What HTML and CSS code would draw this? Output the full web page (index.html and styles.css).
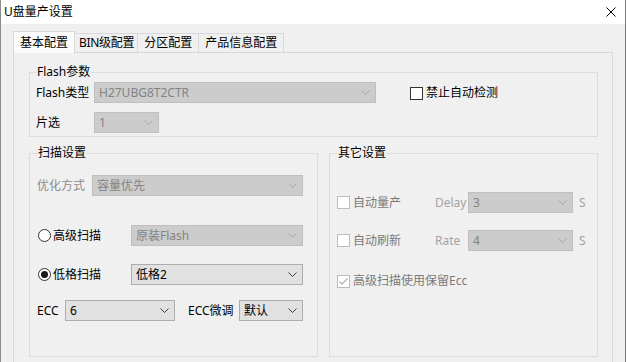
FILE: index.html
```html
<!DOCTYPE html>
<html lang="zh-CN">
  <head>
    <meta charset="utf-8" />
    <title>U盘量产设置</title>
    <link rel="stylesheet" href="styles.css">
  </head>

  <body>
    <div class="window">
      <div class="titlebar">
        <span class="title">U盘量产设置</span>
        <svg class="close" width="10" height="10" viewBox="0 0 10 10">
          <path d="M0.5 0.5 L9.5 9.5 M9.5 0.5 L0.5 9.5" stroke="#000" stroke-width="1" fill="none" />
        </svg>
      </div>

      <div class="dialog">
        <div class="tabs">
          <div class="tab active">基本配置</div>
          <div class="tab tab-bin">BIN级配置</div>
          <div class="tab">分区配置</div>
          <div class="tab">产品信息配置</div>
        </div>

        <div class="panel">
          <!-- Flash参数 -->
          <fieldset class="group flash">
            <legend>Flash参数</legend>
            <div class="flash-body">
              <div class="flash-fields">
                <div class="row">
                  <span class="label flash-label">Flash类型</span>
                  <div class="combo disabled flash-type">
                    <span>H27UBG8T2CTR</span>
                    <svg width="9" height="5" viewBox="0 0 9 5"><polyline points="0.5,0.5 4.5,4.5 8.5,0.5" /></svg>
                  </div>
                </div>
                <div class="row row-chip">
                  <span class="label flash-label">片选</span>
                  <div class="combo disabled chip">
                    <span>1</span>
                    <svg width="9" height="5" viewBox="0 0 9 5"><polyline points="0.5,0.5 4.5,4.5 8.5,0.5" /></svg>
                  </div>
                </div>
              </div>
              <div class="check no-detect">
                <span class="box"></span>
                <span>禁止自动检测</span>
              </div>
            </div>
          </fieldset>

          <div class="lower">
            <!-- 扫描设置 -->
            <fieldset class="group scan">
              <legend>扫描设置</legend>
              <div class="row scan-opt">
                <span class="label dim opt-label">优化方式</span>
                <div class="combo disabled opt-combo">
                  <span>容量优先</span>
                  <svg width="9" height="5" viewBox="0 0 9 5"><polyline points="0.5,0.5 4.5,4.5 8.5,0.5" /></svg>
                </div>
              </div>
              <div class="row scan-adv">
                <div class="radio-item">
                  <span class="radio"></span>
                  <span>高级扫描</span>
                </div>
                <div class="combo disabled scan-combo">
                  <span>原装Flash</span>
                  <svg width="9" height="5" viewBox="0 0 9 5"><polyline points="0.5,0.5 4.5,4.5 8.5,0.5" /></svg>
                </div>
              </div>
              <div class="row scan-low">
                <div class="radio-item">
                  <span class="radio checked"></span>
                  <span>低格扫描</span>
                </div>
                <div class="combo scan-combo">
                  <span>低格2</span>
                  <svg width="9" height="5" viewBox="0 0 9 5"><polyline points="0.5,0.5 4.5,4.5 8.5,0.5" /></svg>
                </div>
              </div>
              <div class="row scan-ecc">
                <span class="label ecc-label">ECC</span>
                <div class="combo ecc-combo">
                  <span>6</span>
                  <svg width="9" height="5" viewBox="0 0 9 5"><polyline points="0.5,0.5 4.5,4.5 8.5,0.5" /></svg>
                </div>
                <span class="label tune-label">ECC微调</span>
                <div class="combo tune-combo">
                  <span>默认</span>
                  <svg width="9" height="5" viewBox="0 0 9 5"><polyline points="0.5,0.5 4.5,4.5 8.5,0.5" /></svg>
                </div>
              </div>
            </fieldset>

            <!-- 其它设置 -->
            <fieldset class="group other">
              <legend>其它设置</legend>
              <div class="row other-auto">
                <div class="check disabled auto-check">
                  <span class="box"></span>
                  <span>自动量产</span>
                </div>
                <span class="label faint unit-label">Delay</span>
                <div class="combo disabled timer-combo">
                  <span>3</span>
                  <svg width="9" height="5" viewBox="0 0 9 5"><polyline points="0.5,0.5 4.5,4.5 8.5,0.5" /></svg>
                </div>
                <span class="label faint unit">S</span>
              </div>
              <div class="row other-refresh">
                <div class="check disabled auto-check">
                  <span class="box"></span>
                  <span>自动刷新</span>
                </div>
                <span class="label faint unit-label">Rate</span>
                <div class="combo disabled timer-combo">
                  <span>4</span>
                  <svg width="9" height="5" viewBox="0 0 9 5"><polyline points="0.5,0.5 4.5,4.5 8.5,0.5" /></svg>
                </div>
                <span class="label faint unit">S</span>
              </div>
              <div class="row other-ecc">
                <div class="check disabled">
                  <span class="box">
                    <svg width="11" height="11" viewBox="0 0 11 11"><polyline points="1.5,5.5 4,8 9.5,2.5" /></svg>
                  </span>
                  <span>高级扫描使用保留Ecc</span>
                </div>
              </div>
            </fieldset>
          </div>
        </div>
      </div>
    </div>
  </body>
</html>
```

FILE: styles.css
```css
html {
  font-family: "Noto Sans", "Noto Sans CJK SC", sans-serif;
  font-size: 12px;
  line-height: 16px;
}

body {
  margin: 0;
  width: 627px;
  height: 362px;
  overflow: hidden;
  background-color: #fff;
  color: #000;
}

.window {
  box-sizing: border-box;
  width: 626px;
  height: 362px;
  border-left: 1px solid #8c8c8c;
  border-right: 1px solid #7a7a7a;
  background-color: #f0f0f0;
}

.titlebar {
  height: 24px;
  background-color: #fff;
  display: flex;
  align-items: center;
  justify-content: space-between;
  padding: 0 9px 0 3px;
}

.close {
  margin-bottom: 1px;
}

.dialog {
  padding: 7px 12px 0 12px;
}

/* tabs */
.tabs {
  display: flex;
  align-items: flex-end;
  height: 21px;
}

.tab {
  box-sizing: border-box;
  height: 19px;
  padding: 0 6px;
  line-height: 18px;
  border: 1px solid #d9d9d9;
  border-bottom: none;
  margin-left: -1px;
  background-color: #f0f0f0;
}

.tab-bin {
  padding: 0 3px 0 4px;
  letter-spacing: -0.3px;
}

.tab.active {
  height: 22px;
  margin-left: 0;
  margin-bottom: -1px;
  line-height: 21px;
  background-color: #fbfbfb;
  position: relative;
  z-index: 1;
}

.panel {
  box-sizing: border-box;
  border: 1px solid #d9d9d9;
  border-bottom: none;
  height: 310px;
  padding: 11px 14px 0 15px;
}

/* group boxes */
.group {
  margin: 0;
  padding: 0;
  border: 1px solid #dcdcdc;
  min-width: 0;
}

.group legend {
  margin-left: 0;
  padding: 0 1px;
  line-height: 16px;
}

.row {
  display: flex;
  align-items: center;
}

.label {
  white-space: nowrap;
}

.dim {
  color: #8c8c8c;
}

.faint {
  color: #a3a3a3;
}

/* combo boxes */
.combo {
  box-sizing: border-box;
  height: 21px;
  display: flex;
  align-items: center;
  justify-content: space-between;
  padding: 0 5px 0 4px;
  border: 1px solid #adadad;
  background-color: #e1e1e1;
  color: #000;
}

.combo svg polyline {
  fill: none;
  stroke: #3c3c3c;
  stroke-width: 1;
}

.combo.disabled {
  border-color: #bfbfbf;
  background-color: #cccccc;
  color: #838383;
}

.combo.disabled svg polyline {
  stroke: #a6a6a6;
}

/* check boxes and radios */
.check,
.radio-item {
  display: flex;
  align-items: center;
  white-space: nowrap;
}

.box {
  box-sizing: border-box;
  width: 13px;
  height: 13px;
  border: 1px solid #333;
  background-color: #fff;
  margin-right: 3px;
  display: flex;
  align-items: center;
  justify-content: center;
}

.check.disabled {
  color: #7a7a7a;
}

.check.disabled .box {
  border-color: #bcbcbc;
}

.box svg polyline {
  fill: none;
  stroke: #b4b4b4;
  stroke-width: 1.3;
}

.radio {
  box-sizing: border-box;
  width: 13px;
  height: 13px;
  border: 1px solid #333;
  border-radius: 50%;
  background-color: #fff;
  margin: 0 2px 0 1px;
  display: flex;
  align-items: center;
  justify-content: center;
}

.radio.checked::after {
  content: "";
  width: 7px;
  height: 7px;
  border-radius: 50%;
  background-color: #1a1a1a;
}

/* Flash参数 */
.flash {
  width: 569px;
  box-sizing: border-box;
  padding: 0 0 3px 6px;
}

.flash-body {
  display: flex;
  align-items: flex-start;
}

.flash-fields {
  padding-top: 2px;
}

.flash-label {
  width: 58px;
}

.flash-type {
  width: 282px;
}

.row-chip {
  margin-top: 9px;
}

.chip {
  width: 65px;
}

.no-detect {
  margin: 5px 0 0 34px;
}

/* lower groups */
.lower {
  display: flex;
  gap: 11px;
  margin-top: 8px;
}

.scan,
.other {
  box-sizing: border-box;
  height: 212px;
}

.scan {
  width: 289px;
  padding: 0 0 0 7px;
}

.other {
  width: 269px;
  padding: 0 0 0 7px;
}

.scan-opt {
  margin-top: 14px;
}

.opt-label {
  width: 55px;
}

.opt-combo {
  width: 211px;
}

.scan-adv {
  margin-top: 29px;
}

.scan-adv .radio-item,
.scan-low .radio-item {
  width: 94px;
}

.scan-combo {
  width: 172px;
}

.scan-low {
  margin-top: 18px;
}

.scan-ecc {
  margin-top: 15px;
}

.ecc-label {
  width: 28px;
}

.ecc-combo {
  width: 110px;
}

.tune-label {
  width: 51px;
  margin-left: 13px;
}

.tune-combo {
  width: 64px;
}

.other-auto {
  margin-top: 31px;
}

.other-refresh {
  margin-top: 17px;
}

.auto-check {
  width: 98px;
}

.unit-label {
  width: 33px;
}

.timer-combo {
  width: 105px;
}

.unit {
  margin-left: 6px;
}

.other-ecc {
  margin-top: 22px;
}
```
